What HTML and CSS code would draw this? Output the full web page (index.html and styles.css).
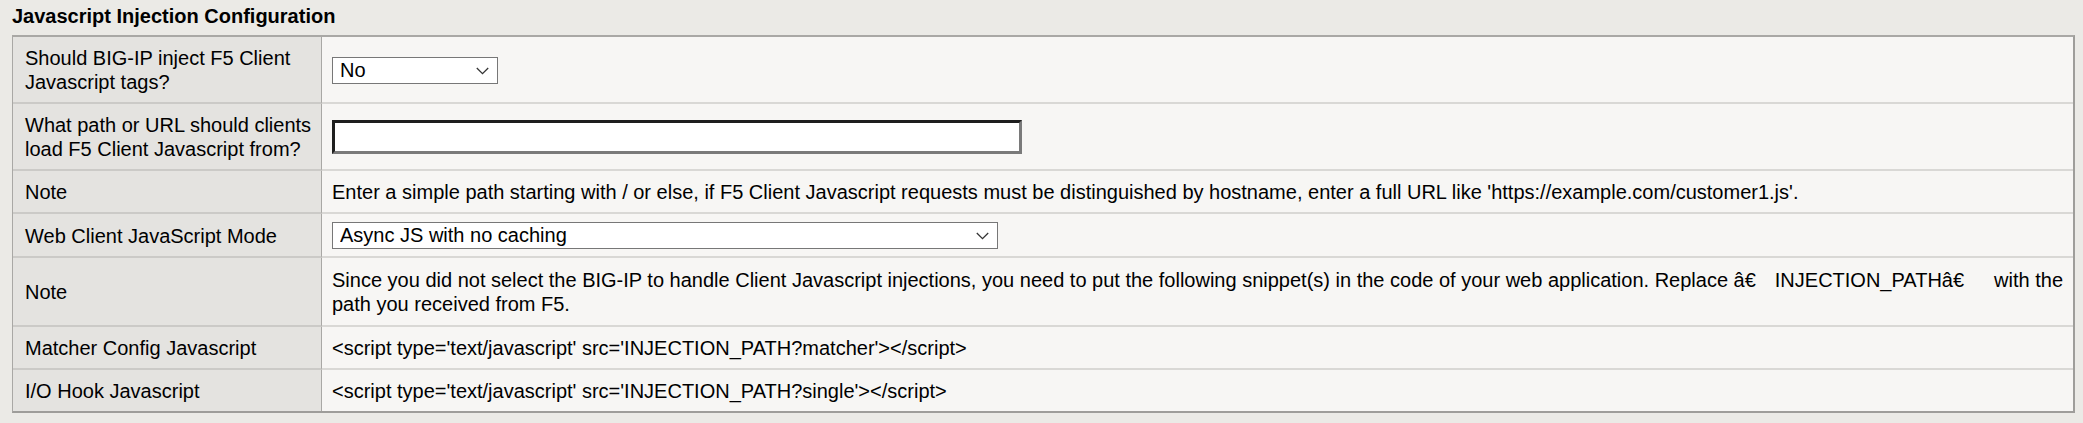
FILE: index.html
```html
<!DOCTYPE html>
<html lang="en">
<head>
<meta charset="utf-8">
<title>Javascript Injection Configuration</title>
<link rel="stylesheet" href="styles.css">
</head>
<body>
<div class="page">
  <h2 class="title">Javascript Injection Configuration</h2>
  <div class="cfg">
    <div class="lbl">Should BIG-IP inject F5 Client<br>Javascript tags?</div>
    <div class="val">
      <span class="sel sel-short">
        <select><option>No</option></select>
        <svg class="chev" width="13" height="8" viewBox="0 0 13 8"><path d="M0.8 1 L6.5 6.6 L12.2 1" fill="none" stroke="#333" stroke-width="1.3"/></svg>
      </span>
    </div>

    <div class="lbl">What path or URL should clients<br>load F5 Client Javascript from?</div>
    <div class="val"><input class="txt" type="text"></div>

    <div class="lbl">Note</div>
    <div class="val">Enter a simple path starting with / or else, if F5 Client Javascript requests must be distinguished by hostname, enter a full URL like 'https://example.com/customer1.js'.</div>

    <div class="lbl tight">Web Client JavaScript Mode</div>
    <div class="val tight">
      <span class="sel sel-long">
        <select><option>Async JS with no caching</option></select>
        <svg class="chev" width="13" height="8" viewBox="0 0 13 8"><path d="M0.8 1 L6.5 6.6 L12.2 1" fill="none" stroke="#333" stroke-width="1.3"/></svg>
      </span>
    </div>

    <div class="lbl roomy">Note</div>
    <div class="val nowrap roomy">Since you did not select the BIG-IP to handle Client Javascript injections, you need to put the following snippet(s) in the code of your web application. Replace â€<span class="gap g1"></span>INJECTION_PATHâ€<span class="gap g2"></span>with the<br>path you received from F5.</div>

    <div class="lbl">Matcher Config Javascript</div>
    <div class="val">&lt;script type='text/javascript' src='INJECTION_PATH?matcher'&gt;&lt;/script&gt;</div>

    <div class="lbl last">I/O Hook Javascript</div>
    <div class="val last">&lt;script type='text/javascript' src='INJECTION_PATH?single'&gt;&lt;/script&gt;</div>
  </div>
</div>
</body>
</html>
```
FILE: styles.css
```css
html, body {
  margin: 0;
  padding: 0;
  background: #ebeae6;
}

body {
  font-family: "Liberation Sans", Arial, Helvetica, sans-serif;
  font-size: 20px;
  color: #000;
}

.page {
  padding: 4px 8px 0 12px;
}

.title {
  margin: 0 0 6px 0;
  font-size: 20px;
  line-height: 25px;
  font-weight: bold;
}

.cfg {
  display: grid;
  grid-template-columns: 309px minmax(0, 1fr);
  border-top: 2px solid #a9a8a5;
  border-left: 1px solid #a9a8a5;
  border-right: 2px solid #9e9d9a;
  border-bottom: 2px solid #9e9d9a;
}

.lbl,
.val {
  display: flex;
  align-items: center;
  min-width: 0;
  line-height: 24px;
  padding: 9px 8px 8px 12px;
  border-bottom: 2px solid #d9d8d5;
}

.lbl {
  background: #e4e3e0;
  white-space: nowrap;
  border-right: 1px solid #a9a8a5;
  border-bottom-color: #cbcac7;
  padding-left: 12px;
}

.val {
  background: #f7f6f4;
  padding-left: 10px;
  flex-wrap: wrap;
}

.tight {
  padding-top: 8px;
  padding-bottom: 7px;
}

.roomy {
  padding-top: 10px;
  padding-bottom: 9px;
}

.nowrap {
  display: block;
  white-space: nowrap;
  overflow: hidden;
}

.lbl.last,
.val.last {
  border-bottom: none;
}

.sel {
  position: relative;
  display: inline-block;
}

.sel select {
  appearance: none;
  -webkit-appearance: none;
  display: block;
  height: 27px;
  margin: 0;
  padding: 0 0 0 7px;
  border: 1px solid #777;
  border-radius: 0;
  background: #fff;
  color: #000;
  font-family: "Liberation Sans", Arial, Helvetica, sans-serif;
  font-size: 20px;
  line-height: 25px;
}

.sel-short select {
  width: 166px;
}

.sel-long select {
  width: 666px;
}

.chev {
  position: absolute;
  right: 9px;
  top: 10px;
  pointer-events: none;
}

.txt {
  display: block;
  box-sizing: border-box;
  width: 690px;
  height: 34px;
  margin: 0;
  padding: 0 4px;
  background: #fff;
  border-style: solid;
  border-width: 3px;
  border-color: #1e1e1e #7a7a7a #7a7a7a #1e1e1e;
  font-family: "Liberation Sans", Arial, sans-serif;
  font-size: 20px;
}

.gap {
  display: inline-block;
}

.g1 {
  width: 19px;
}

.g2 {
  width: 30px;
}
```
